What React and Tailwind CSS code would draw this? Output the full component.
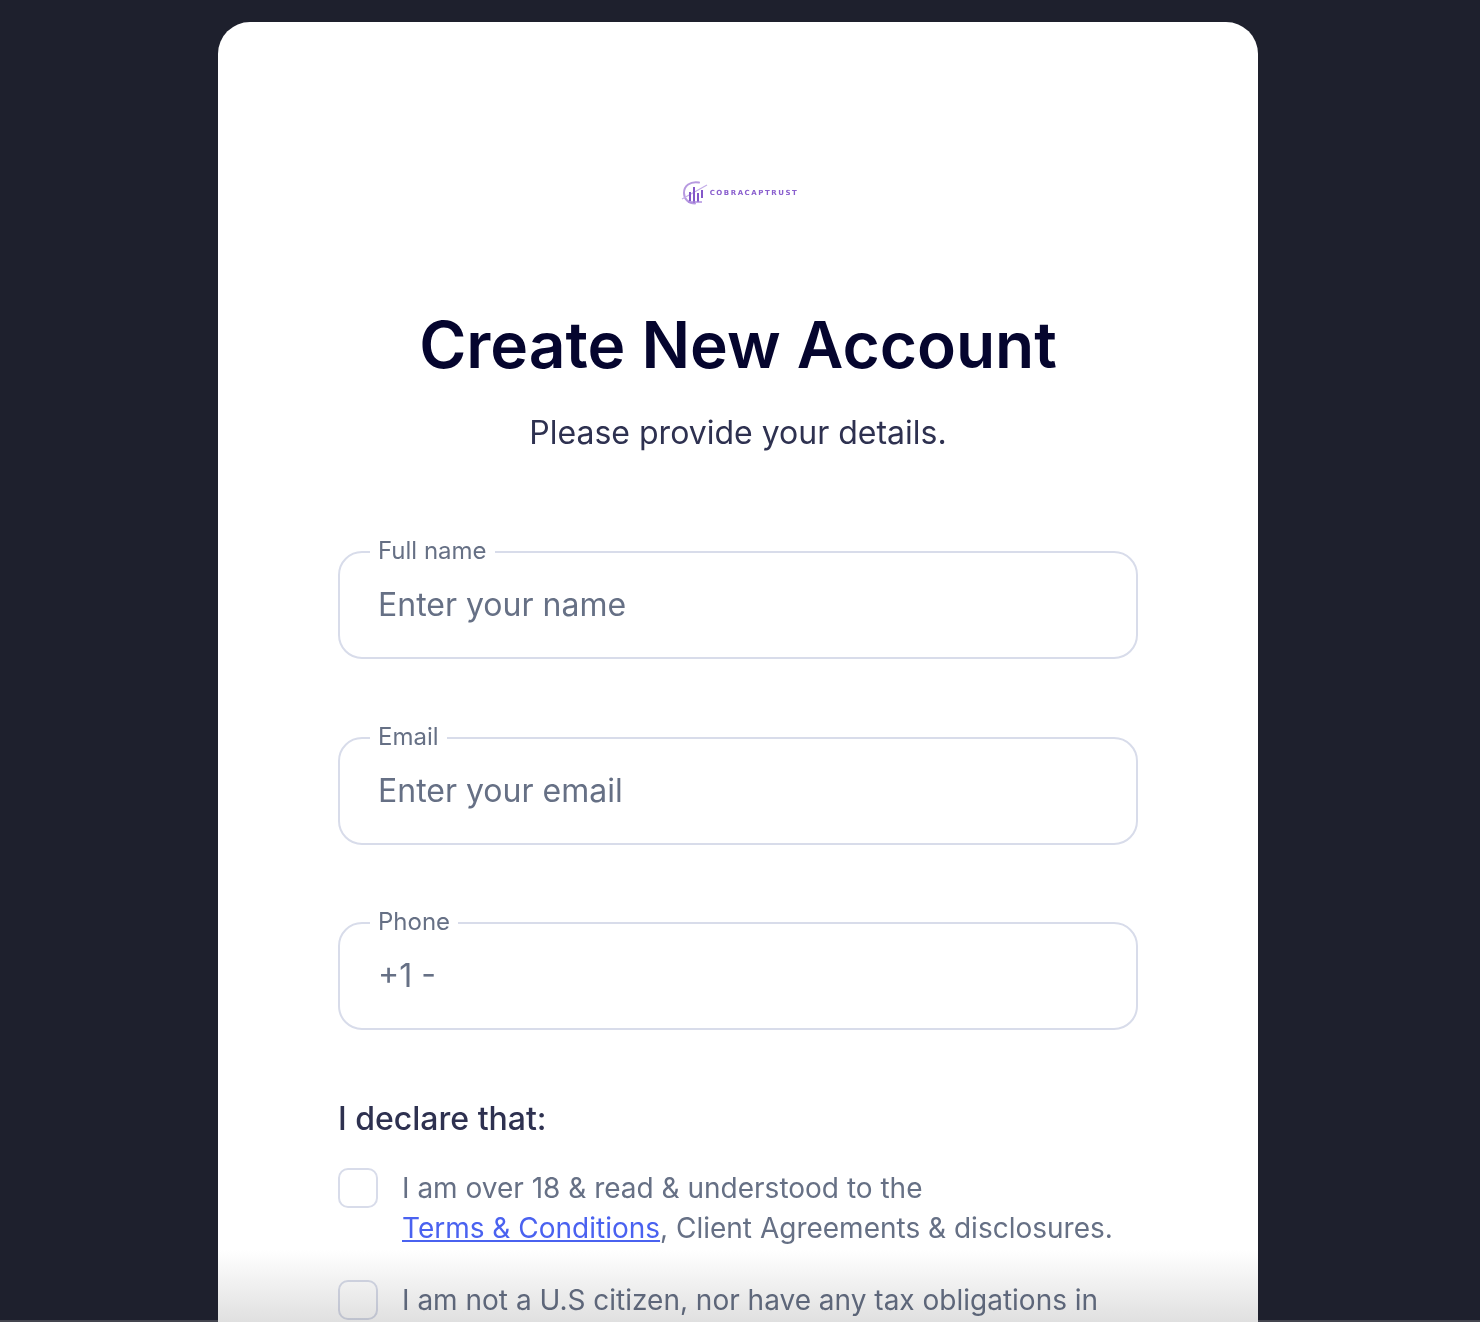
import React from "react";

const fields = [
  { label: "Full name", placeholder: "Enter your name" },
  { label: "Email", placeholder: "Enter your email" },
  { label: "Phone", placeholder: "+1 -" },
];

function Logo() {
  return (
    <div className="flex items-center justify-center gap-[1px] h-[28px] pl-[3px]">
      <svg width="28" height="26" viewBox="0 0 28 26" fill="none">
        <path d="M18 2.500C9 1 3 6 3 13c0 6 4.500 10.500 11 10.500" stroke="#b79ae0" strokeWidth="2" strokeLinecap="round" />
        <path d="M1 19 L26 5" stroke="#c4aee8" strokeWidth="1.200" />
        <path d="M9 21V12M13 23V7M17 22V13M21 18V10" stroke="#8457c9" strokeWidth="2" />
        <path d="M7 22h14" stroke="#a987dd" strokeWidth="1.400" />
      </svg>
      <span className="text-[7px] leading-none font-bold tracking-[1.55px] text-[#8a5fce] font-['DejaVu_Sans',sans-serif]">COBRACAPTRUST</span>
    </div>
  );
}

function Field({ label, placeholder }) {
  return (
    <fieldset className="h-[121px] border-2 border-[#d8dcea] rounded-[24px] px-[38px] flex flex-col">
      <legend className="ml-[-8px] px-2 text-[24px] leading-[28px] text-[#667085]">
        <span className="block -translate-y-[1px]">{label}</span>
      </legend>
      <div className="text-[32px] leading-[40px] text-[#667085] mt-[19px]">{placeholder}</div>
    </fieldset>
  );
}

function Check({ children }) {
  return (
    <div className="flex gap-[24px]">
      <div className="w-[40px] h-[40px] shrink-0 border-2 border-[#d8dcea] rounded-[10px]" />
      <div className="text-[28px] leading-[40px] text-[#667085]">{children}</div>
    </div>
  );
}

export default function App() {
  return (
    <div className="relative h-[1322px] overflow-hidden bg-[#1e202d] font-['Inter',sans-serif]">
      <div className="w-[1040px] ml-[218px] bg-white rounded-t-[32px] px-[120px] pt-[157px] min-h-[1300px] translate-y-[22px]">
        <Logo />
        <h1 className="mt-[98px] text-center text-[64px] leading-[80px] font-semibold text-[#05052e]">Create New Account</h1>
        <p className="mt-[28px] text-center text-[32px] leading-[40px] text-[#2e3150]">Please provide your details.</p>
        <div className="mt-[85px] flex flex-col gap-[64.5px]">
          {fields.map((f) => (
            <Field key={f.label} label={f.label} placeholder={f.placeholder} />
          ))}
        </div>
        <div className="mt-[69px] text-[32px] leading-[40px] font-medium text-[#2e3150]">I declare that:</div>
        <div className="mt-[29px] flex flex-col gap-[32px]">
          <Check>
            I am over 18 &amp; read &amp; understood to the
            <br />
            <span className="text-[#4a62f0] underline">Terms &amp; Conditions</span>, Client Agreements &amp; disclosures.
          </Check>
          <Check>I am not a U.S citizen, nor have any tax obligations in</Check>
        </div>
      </div>
      <div className="absolute bottom-0 left-[218px] w-[1040px] h-[72px] bg-gradient-to-b from-white to-[#e0e0e0] mix-blend-multiply" />
      <div className="absolute bottom-0 left-0 w-[218px] h-[2px] bg-[#44454f]" />
      <div className="absolute bottom-0 right-0 w-[222px] h-[2px] bg-[#44454f]" />
    </div>
  );
}
